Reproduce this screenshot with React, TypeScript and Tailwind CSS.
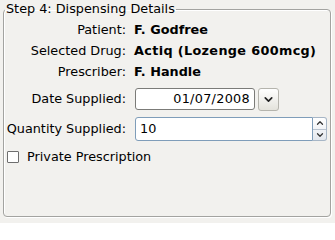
import { ChevronDown, ChevronUp } from "lucide-react";

export default function App() {
  return (
    <div className="w-[335px] h-[223px] bg-[#f2f1ee] pt-[2px] font-['DejaVu_Sans',sans-serif] text-[12.8px] text-black leading-none">
      <fieldset className="ml-[3px] mr-[4px] h-[215px] rounded-[4px] border border-[#a3a3a0] shadow-[inset_1px_1px_0_#fff,1px_1px_0_#fff] px-0 pb-0">
        <legend className="ml-[1px] px-[1px] leading-[14px]">Step 4: Dispensing Details</legend>

        <div className="grid grid-cols-[122px_1fr] gap-x-[8px] pt-[3px]">
          {/* Patient / drug / prescriber */}
          <div className="text-right h-[21px] leading-[21px]">Patient:</div>
          <div className="font-bold h-[21px] leading-[21px]">F. Godfree</div>
          <div className="text-right h-[21px] leading-[21px]">Selected Drug:</div>
          <div className="font-bold h-[21px] leading-[21px] tracking-[0.35px]">Actiq (Lozenge 600mcg)</div>
          <div className="text-right h-[21px] leading-[21px]">Prescriber:</div>
          <div className="font-bold h-[21px] leading-[21px]">F. Handle</div>

          {/* Date */}
          <div className="text-right mt-[5px] h-[24px] leading-[24px]">Date Supplied:</div>
          <div className="flex items-center gap-[3px] mt-[5px] h-[24px] ml-[1px]">
            <div className="w-[120px] h-[22px] rounded-[3px] border border-[#7b7b78] bg-white text-right pr-[4px] leading-[20px] tracking-[0.3px]">
              01/07/2008
            </div>
            <div className="w-[21px] h-[23px] rounded-[3px] border border-[#b5b4ad] bg-gradient-to-b from-white to-[#e4e3dc] flex items-center justify-center">
              <ChevronDown size={13} strokeWidth={3} className="text-[#222]" />
            </div>
          </div>

          {/* Quantity */}
          <div className="text-right mt-[6px] h-[24px] leading-[24px]">Quantity Supplied:</div>
          <div className="flex mt-[6px] h-[24px] mr-[3px] ml-[1px]">
            <div className="flex-1 h-[24px] rounded-l-[3px] border border-[#7f9db9] bg-white pl-[4px] leading-[22px]">
              10
            </div>
            <div className="w-[14px] h-[24px] flex flex-col border border-l-0 border-[#a7b6c6] rounded-r-[3px] bg-gradient-to-b from-white to-[#e4e8ee]">
              <div className="flex-1 flex items-center justify-center border-b border-[#b9c3cf]">
                <ChevronUp size={10} strokeWidth={3} className="text-[#333]" />
              </div>
              <div className="flex-1 flex items-center justify-center">
                <ChevronDown size={10} strokeWidth={3} className="text-[#333]" />
              </div>
            </div>
          </div>
        </div>

        {/* Private prescription */}
        <label className="flex items-center gap-[8px] ml-[3px] mt-[10px]">
          <span className="w-[12px] h-[12px] border border-[#6e6e6e] bg-white rounded-[1px]" />
          <span>Private Prescription</span>
        </label>
      </fieldset>
    </div>
  );
}
